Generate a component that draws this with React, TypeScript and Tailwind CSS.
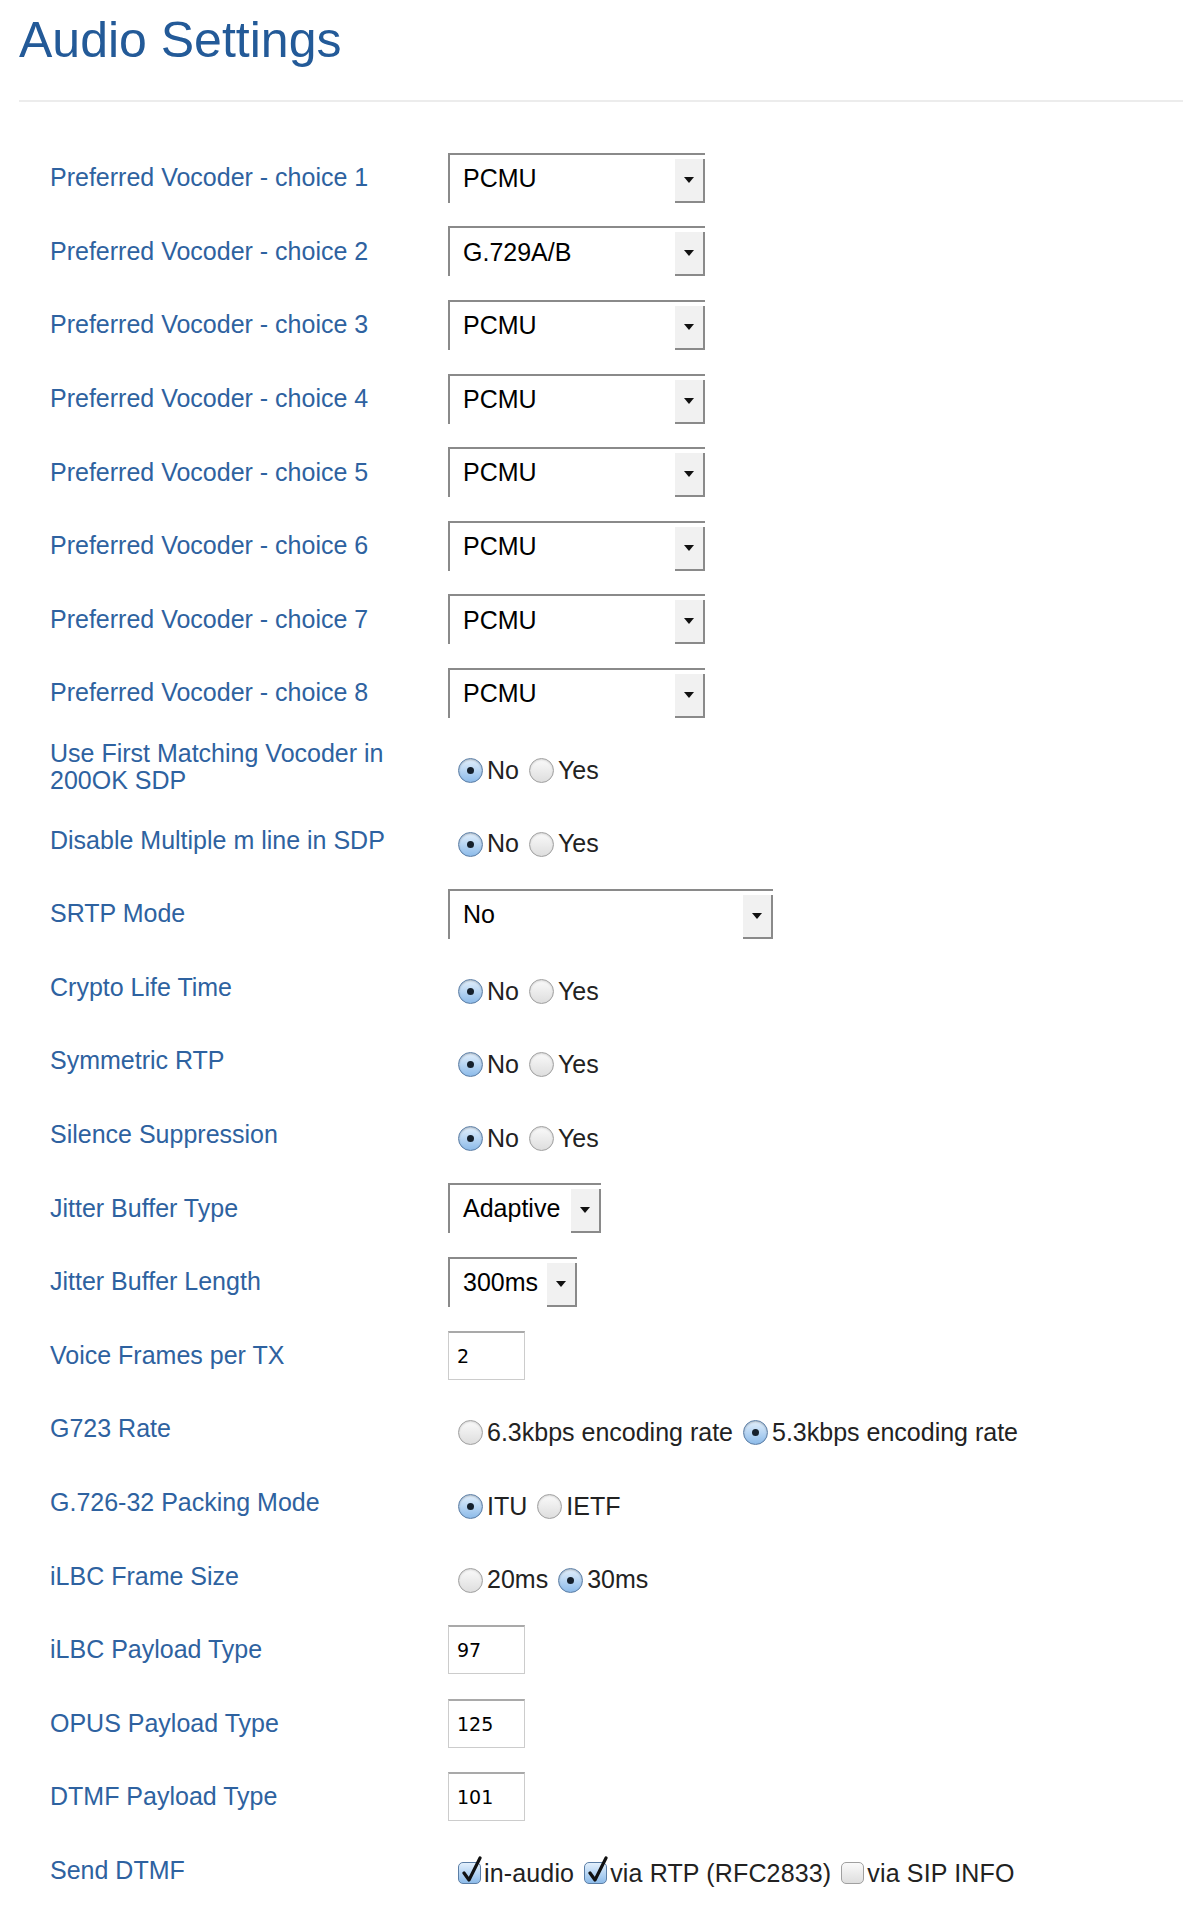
import React from 'react';

type Row =
  | { label: string; kind: 'select'; value: string; width: number }
  | { label: string; kind: 'radio'; options: string[]; checked: number }
  | { label: string; kind: 'input'; value: string }
  | { label: string; kind: 'check'; options: { text: string; on: boolean }[] };

const rows: Row[] = [
  { label: 'Preferred Vocoder - choice 1', kind: 'select', value: 'PCMU', width: 257 },
  { label: 'Preferred Vocoder - choice 2', kind: 'select', value: 'G.729A/B', width: 257 },
  { label: 'Preferred Vocoder - choice 3', kind: 'select', value: 'PCMU', width: 257 },
  { label: 'Preferred Vocoder - choice 4', kind: 'select', value: 'PCMU', width: 257 },
  { label: 'Preferred Vocoder - choice 5', kind: 'select', value: 'PCMU', width: 257 },
  { label: 'Preferred Vocoder - choice 6', kind: 'select', value: 'PCMU', width: 257 },
  { label: 'Preferred Vocoder - choice 7', kind: 'select', value: 'PCMU', width: 257 },
  { label: 'Preferred Vocoder - choice 8', kind: 'select', value: 'PCMU', width: 257 },
  { label: 'Use First Matching Vocoder in 200OK SDP', kind: 'radio', options: ['No', 'Yes'], checked: 0 },
  { label: 'Disable Multiple m line in SDP', kind: 'radio', options: ['No', 'Yes'], checked: 0 },
  { label: 'SRTP Mode', kind: 'select', value: 'No', width: 325 },
  { label: 'Crypto Life Time', kind: 'radio', options: ['No', 'Yes'], checked: 0 },
  { label: 'Symmetric RTP', kind: 'radio', options: ['No', 'Yes'], checked: 0 },
  { label: 'Silence Suppression', kind: 'radio', options: ['No', 'Yes'], checked: 0 },
  { label: 'Jitter Buffer Type', kind: 'select', value: 'Adaptive', width: 153 },
  { label: 'Jitter Buffer Length', kind: 'select', value: '300ms', width: 129 },
  { label: 'Voice Frames per TX', kind: 'input', value: '2' },
  { label: 'G723 Rate', kind: 'radio', options: ['6.3kbps encoding rate', '5.3kbps encoding rate'], checked: 1 },
  { label: 'G.726-32 Packing Mode', kind: 'radio', options: ['ITU', 'IETF'], checked: 0 },
  { label: 'iLBC Frame Size', kind: 'radio', options: ['20ms', '30ms'], checked: 1 },
  { label: 'iLBC Payload Type', kind: 'input', value: '97' },
  { label: 'OPUS Payload Type', kind: 'input', value: '125' },
  { label: 'DTMF Payload Type', kind: 'input', value: '101' },
  {
    label: 'Send DTMF',
    kind: 'check',
    options: [
      { text: 'in-audio', on: true },
      { text: 'via RTP (RFC2833)', on: true },
      { text: 'via SIP INFO', on: false },
    ],
  },
];

const Select: React.FC<{ value: string; width: number }> = ({ value, width }) => (
  <div className="flex h-[50px] items-stretch border-l-2 border-t-2 border-[#8a8a8a] bg-white" style={{ width }}>
    <span className="flex flex-1 items-center pl-[13px] text-[25px] text-black">{value}</span>
    <span className="mt-[4px] flex w-[30px] items-center justify-center border-b-2 border-r-2 border-[#8a8a8a] bg-[#f1f1f1]">
      <svg width="10" height="6" viewBox="0 0 10 6">
        <path d="M0 0h10L5 6z" fill="#111" />
      </svg>
    </span>
  </div>
);

const Radio: React.FC<{ on: boolean }> = ({ on }) =>
  on ? (
    <span className="flex h-[25px] w-[25px] items-center justify-center rounded-full border border-[#5b7ea6] bg-linear-to-b from-[#e3f0fc] to-[#8dbbe9] shadow-[inset_0_1px_2px_rgba(0,0,0,0.25)]">
      <span className="h-[7px] w-[7px] rounded-full bg-[#15202c]" />
    </span>
  ) : (
    <span className="h-[25px] w-[25px] rounded-full border border-[#a0a0a0] bg-linear-to-b from-[#fafafa] to-[#dedede] shadow-[inset_0_1px_2px_rgba(0,0,0,0.15)]" />
  );

const Check: React.FC<{ on: boolean }> = ({ on }) => (
  <span
    className={
      on
        ? 'relative h-[22px] w-[23px] rounded-[5px] border border-[#5b7ea6] bg-linear-to-b from-[#e3f0fc] to-[#8dbbe9]'
        : 'relative h-[22px] w-[23px] rounded-[5px] border border-[#a0a0a0] bg-linear-to-b from-[#fafafa] to-[#dedede]'
    }
  >
    {on && (
      <svg className="absolute left-[2px] top-[-7px]" width="22" height="28" viewBox="0 0 22 28">
        <path d="M3 17l5 7L19 2" fill="none" stroke="#111" strokeWidth="3.2" strokeLinecap="round" strokeLinejoin="round" />
      </svg>
    )}
  </span>
);

const Control: React.FC<{ row: Row }> = ({ row }) => {
  if (row.kind === 'select') return <Select value={row.value} width={row.width} />;
  if (row.kind === 'input')
    return (
      <div className="flex h-[49px] w-[77px] items-center border border-[#cccccc] border-t-[#a9a9a9] border-t-2 bg-white pl-[8px] font-['DejaVu_Sans',sans-serif] text-[19px] text-black">
        {row.value}
      </div>
    );
  if (row.kind === 'radio')
    return (
      <div className="mt-[8px] flex items-center gap-[10px] pl-[10px] text-[25px] text-[#222]">
        {row.options.map((o, i) => (
          <label key={o} className="flex items-center gap-[4px]">
            <Radio on={i === row.checked} />
            <span>{o}</span>
          </label>
        ))}
      </div>
    );
  return (
    <div className="mt-[6px] flex items-center gap-[10px] pl-[10px] text-[25px] text-[#222]">
      {row.options.map((o) => (
        <label key={o.text} className="flex items-center gap-[3px]">
          <Check on={o.on} />
          <span className="tracking-[0.15px]">{o.text}</span>
        </label>
      ))}
    </div>
  );
};

export default function App() {
  return (
    <div className="min-h-[1908px] w-[1200px] bg-white pl-[19px] pr-[17px] font-['Liberation_Sans',Arial,sans-serif]">
      <div className="border-b-2 border-[#ececec] pb-[33px] pt-[13px]">
        <h1 className="text-[50px] leading-[54px] text-[#235a98]">Audio Settings</h1>
      </div>
      <div className="pt-[39px]">
        {rows.map((row) => (
          <div key={row.label} className="flex h-[73.6px] items-center">
            <div className="w-[429px] pl-[31px]">
              <div className="w-[370px] text-[25px] leading-[27px] text-[#2e62a0]">{row.label}</div>
            </div>
            <Control row={row} />
          </div>
        ))}
      </div>
    </div>
  );
}
